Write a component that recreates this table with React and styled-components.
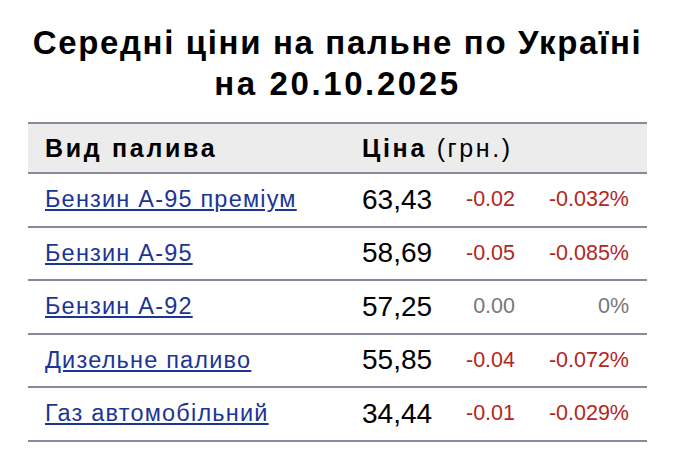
import styled, { createGlobalStyle } from 'styled-components';

const GlobalStyle = createGlobalStyle`
  html, body {
    margin: 0;
    padding: 0;
    background: #fff;
  }
  body {
    font-family: 'Liberation Sans', Arial, sans-serif;
    color: #000;
  }
`;

const Wrapper = styled.div`
  width: 619px;
  margin: 0 0 0 28px;
  padding-top: 22px;
`;

const Title = styled.h1`
  margin: 0 0 18px;
  font-size: 33px;
  line-height: 41px;
  font-weight: bold;
  letter-spacing: 1.65px;
  text-align: center;
`;

const DateLine = styled.span`
  letter-spacing: 2.6px;
`;

const Table = styled.div`
  border-top: 2px solid #8c8a99;
`;

const Row = styled.div`
  display: grid;
  grid-template-columns: 317px 90px 63px 114px;
  align-items: center;
  height: ${(p) => (p.head ? '48px' : '51.5px')};
  padding: 0 18px 0 17px;
  background: ${(p) => (p.head ? '#ececec' : '#fff')};
  border-bottom: 2px solid #8c8a99;
`;

const HeadCell = styled.div`
  font-size: 25px;
  font-weight: bold;
  letter-spacing: 2.7px;
  white-space: nowrap;
  grid-column: ${(p) => p.span || 'auto'};
`;

const Unit = styled.span`
  font-weight: normal;
  letter-spacing: 2.6px;
`;

const FuelLink = styled.a`
  font-size: 23.5px;
  letter-spacing: 1.2px;
  color: #1b3594;
  text-decoration: underline;
  white-space: nowrap;
`;

const Price = styled.div`
  font-size: 28px;
  white-space: nowrap;
`;

const Change = styled.div`
  font-size: 21.5px;
  text-align: right;
  white-space: nowrap;
  color: ${(p) => (p.zero ? '#777' : '#b3261e')};
`;

const fuels = [
  { name: 'Бензин А-95 преміум', price: '63,43', diff: '-0.02', pct: '-0.032%' },
  { name: 'Бензин А-95', price: '58,69', diff: '-0.05', pct: '-0.085%' },
  { name: 'Бензин А-92', price: '57,25', diff: '0.00', pct: '0%' },
  { name: 'Дизельне паливо', price: '55,85', diff: '-0.04', pct: '-0.072%' },
  { name: 'Газ автомобільний', price: '34,44', diff: '-0.01', pct: '-0.029%' },
];

export default function App() {
  return (
    <>
      <GlobalStyle />
      <Wrapper>
        <Title>
          Середні ціни на пальне по Україні
          <br />
          <DateLine>на 20.10.2025</DateLine>
        </Title>
        <Table>
          <Row head>
            <HeadCell>Вид палива</HeadCell>
            <HeadCell span="2 / -1">
              Ціна <Unit>(грн.)</Unit>
            </HeadCell>
          </Row>
          {fuels.map((f) => (
            <Row key={f.name}>
              <div>
                <FuelLink href="#">{f.name}</FuelLink>
              </div>
              <Price>{f.price}</Price>
              <Change zero={f.diff === '0.00'}>{f.diff}</Change>
              <Change zero={f.diff === '0.00'}>{f.pct}</Change>
            </Row>
          ))}
        </Table>
      </Wrapper>
    </>
  );
}
